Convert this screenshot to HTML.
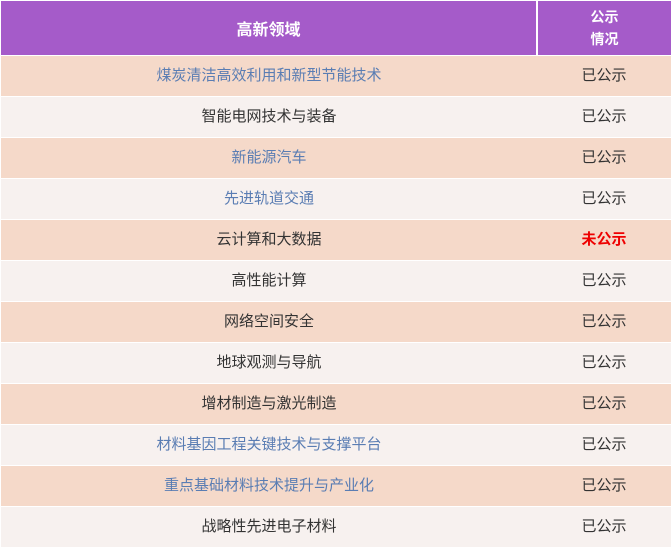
<!DOCTYPE html>
<html><head><meta charset="utf-8"><style>
body{margin:0;width:671px;height:545px;overflow:hidden;background:#fff;font-family:"Liberation Sans","Noto Sans CJK SC",sans-serif;}
.h{position:absolute;top:1px;height:54px;background:#a55bc9;color:#fff;font-weight:bold;display:flex;align-items:center;justify-content:center;text-align:center}
.r{position:absolute;left:1px;width:670px;height:40px;font-size:15px;color:#333}
.r div{position:absolute;top:0;height:40px;line-height:40px;text-align:center}
.a{left:0;width:536px}.b{left:536px;width:134px}
.p{background:#f5d9c9}.l{background:#f7f1ef}
.bl{color:#5a7db3}.red{color:#e00;font-weight:bold}
</style></head><body>
<div class="h" style="left:1px;width:535px;font-size:16px">高新领域</div>
<div class="h" style="left:538px;width:133px;font-size:14px;line-height:22px">公示<br>情况</div>
<div class="r p" style="top:56px"><div class="a bl">煤炭清洁高效利用和新型节能技术</div><div class="b">已公示</div></div>
<div class="r l" style="top:97px"><div class="a">智能电网技术与装备</div><div class="b">已公示</div></div>
<div class="r p" style="top:138px"><div class="a bl">新能源汽车</div><div class="b">已公示</div></div>
<div class="r l" style="top:179px"><div class="a bl">先进轨道交通</div><div class="b">已公示</div></div>
<div class="r p" style="top:220px"><div class="a">云计算和大数据</div><div class="b red">未公示</div></div>
<div class="r l" style="top:261px"><div class="a">高性能计算</div><div class="b">已公示</div></div>
<div class="r p" style="top:302px"><div class="a">网络空间安全</div><div class="b">已公示</div></div>
<div class="r l" style="top:343px"><div class="a">地球观测与导航</div><div class="b">已公示</div></div>
<div class="r p" style="top:384px"><div class="a">增材制造与激光制造</div><div class="b">已公示</div></div>
<div class="r l" style="top:425px"><div class="a bl">材料基因工程关键技术与支撑平台</div><div class="b">已公示</div></div>
<div class="r p" style="top:466px"><div class="a bl">重点基础材料技术提升与产业化</div><div class="b">已公示</div></div>
<div class="r l" style="top:507px"><div class="a">战略性先进电子材料</div><div class="b">已公示</div></div>
</body></html>
